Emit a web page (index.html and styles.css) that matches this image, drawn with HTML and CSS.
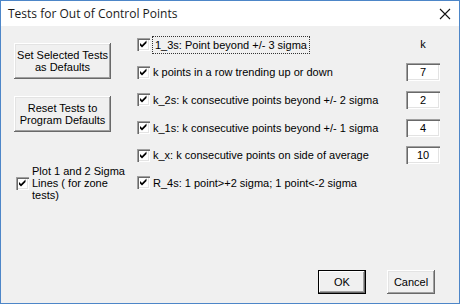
FILE: index.html
```html
<!DOCTYPE html>
<html lang="en">
<head>
  <meta charset="UTF-8">
  <title>Tests for Out of Control Points</title>
  <link rel="stylesheet" href="styles.css">
</head>
<body>

  <div class="window">
    <div class="titlebar">
      <span class="title">Tests for Out of Control Points</span>
      <svg class="close" width="12" height="12" viewBox="0 0 12 12">
        <path d="M1 1 L11 11 M11 1 L1 11" stroke="#111" stroke-width="1.1" fill="none"/>
      </svg>
    </div>

    <div class="content">
      <div class="main">
        <!-- left side: buttons and zone option -->
        <div class="left">
          <button class="btn big">Set Selected Tests<br>as Defaults</button>
          <button class="btn big second">Reset Tests to<br>Program Defaults</button>
          <label class="plot">
            <span class="check"></span>
            <span>Plot 1 and 2 Sigma<br>Lines ( for zone<br>tests)</span>
          </label>
        </div>

        <!-- right side: tests -->
        <div class="tests">
          <label class="test"><span class="check"></span><span class="focus">1_3s: Point beyond +/- 3 sigma</span></label>
          <div class="khead">k</div>

          <label class="test"><span class="check"></span><span>k points in a row trending up or down</span></label>
          <input class="kval" type="text" value="7">

          <label class="test"><span class="check"></span><span>k_2s: k consecutive points beyond +/- 2 sigma</span></label>
          <input class="kval" type="text" value="2">

          <label class="test"><span class="check"></span><span>k_1s: k consecutive points beyond +/- 1 sigma</span></label>
          <input class="kval" type="text" value="4">

          <label class="test"><span class="check"></span><span>k_x: k consecutive points on side of average</span></label>
          <input class="kval" type="text" value="10">

          <label class="test"><span class="check"></span><span>R_4s: 1 point&gt;+2 sigma; 1 point&lt;-2 sigma</span></label>
          <div></div>
        </div>
      </div>

      <div class="footer">
        <button class="btn small default">OK</button>
        <button class="btn small">Cancel</button>
      </div>
    </div>
  </div>

</body>
</html>
```

FILE: styles.css
```css
body {
  margin: 0;
  padding: 0;
  font-family: "Liberation Sans", Arial, sans-serif;
  font-size: 11px;
  color: #000;
  background: #fff;
}

.window {
  width: 460px;
  height: 304px;
  box-sizing: border-box;
  border: 1px solid #4d86c8;
  display: flex;
  flex-direction: column;
}

.titlebar {
  height: 25px;
  background: #fff;
  display: flex;
  align-items: center;
  justify-content: space-between;
  padding: 0 8px 0 7px;
}

.title {
  font-family: "Open Sans", "Noto Sans", sans-serif;
  font-size: 12px;
  color: #1a1a1a;
}

.content {
  flex: 1;
  background: #f0f0f0;
  display: flex;
  flex-direction: column;
}

.main {
  flex: 1;
  display: flex;
}

.left {
  width: 122px;
  padding: 17px 0 0 13px;
  box-sizing: border-box;
  display: flex;
  flex-direction: column;
}

.btn {
  font-family: "Liberation Sans", Arial, sans-serif;
  font-size: 11px;
  line-height: 12px;
  color: #000;
  background: #f0f0f0;
  border: none;
  padding: 0;
  box-shadow: inset -1px -1px 0 #696969, inset 1px 1px 0 #fff, inset -2px -2px 0 #a0a0a0, inset 2px 2px 0 #e3e3e3;
}

.big {
  width: 97px;
  height: 36px;
}

.second {
  margin-top: 17px;
}

.plot {
  display: flex;
  align-items: center;
  gap: 3px;
  margin-top: 33px;
  padding-left: 2px;
  line-height: 12px;
  white-space: nowrap;
}

.check {
  flex: none;
  width: 13px;
  height: 13px;
  box-sizing: border-box;
  background: #fff url("data:image/svg+xml,%3Csvg xmlns='http://www.w3.org/2000/svg' width='13' height='13'%3E%3Cpath d='M3 5 L5 7 L9.5 2.5 L9.5 5 L5 9.5 L3 7.5 Z' fill='%23000'/%3E%3C/svg%3E") no-repeat;
  box-shadow: inset 1px 1px 0 #a0a0a0, inset 2px 2px 0 #696969, inset -1px -1px 0 #fff, inset -2px -2px 0 #e3e3e3;
}

.tests {
  flex: 1;
  display: grid;
  grid-template-columns: 1fr 34px;
  grid-auto-rows: 27.6px;
  align-items: center;
  padding: 5px 19px 0 14px;
  align-content: start;
}

.test {
  display: flex;
  align-items: center;
  gap: 3px;
  white-space: nowrap;
}

.focus {
  outline: 1px dotted #333;
  padding: 2px 2px;
}

.khead {
  text-align: center;
  color: #000;
  padding-bottom: 1px;
}

.kval {
  width: 34px;
  height: 18px;
  box-sizing: border-box;
  border: none;
  background: #fff;
  text-align: center;
  font-family: "Liberation Sans", Arial, sans-serif;
  font-size: 11px;
  padding: 0;
  box-shadow: inset 1px 1px 0 #a0a0a0, inset 2px 2px 0 #696969, inset -1px -1px 0 #fff, inset -2px -2px 0 #e3e3e3;
}

.footer {
  display: flex;
  justify-content: flex-end;
  gap: 21px;
  padding: 0 24px 9px 0;
}

.small {
  width: 48px;
  height: 24px;
}

.default {
  box-shadow: inset 0 0 0 1px #000, inset -2px -2px 0 #696969, inset 2px 2px 0 #fff, inset -3px -3px 0 #a0a0a0;
}
```
